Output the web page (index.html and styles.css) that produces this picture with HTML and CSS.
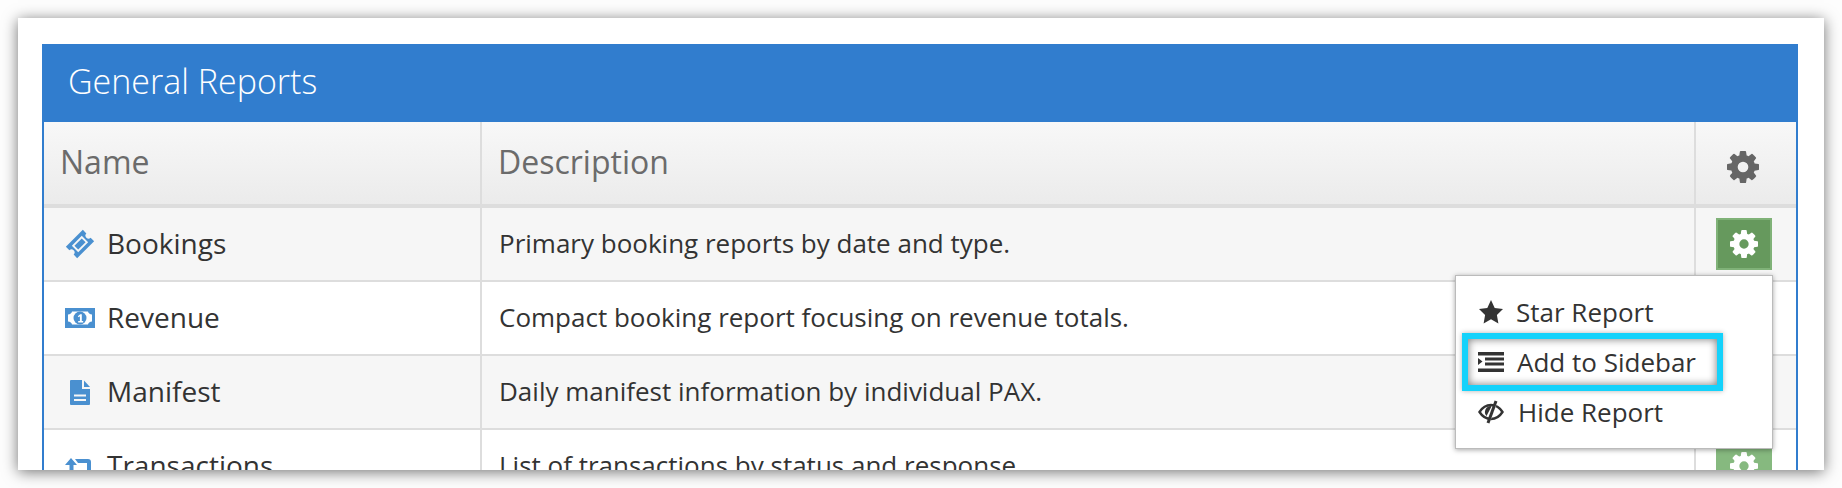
FILE: index.html
```html
<!DOCTYPE html>
<html>

<head>
    <title>General Reports</title>
    <link rel="stylesheet" href="styles.css">
</head>

<body>
    <svg class="defs">
        <defs>
            <symbol id="cog" viewBox="0 -128 1536 1536">
                <path d="M1024 640q0-106-75-181t-181-75-181 75-75 181 75 181 181 75 181-75 75-181zm512-109v222q0 12-8 23t-20 13l-185 28q-19 54-39 91 35 50 107 138 10 12 10 25t-9 23q-27 37-99 108t-94 71q-12 0-26-9l-138-108q-44 23-91 38-16 136-29 186-7 28-36 28h-222q-14 0-24.5-8.5t-11.5-21.5l-28-184q-49-16-90-37l-141 107q-10 9-25 9-14 0-25-11-126-114-165-168-7-10-7-23 0-12 8-23 15-21 51-66.5t54-70.5q-27-50-41-99l-183-27q-13-2-21-12.5t-8-23.5v-222q0-12 8-23t19-13l186-28q14-46 39-92-40-57-107-138-10-12-10-24 0-10 9-23 26-36 98.5-107.5t94.5-71.5q13 0 26 10l138 107q44-23 91-38 16-136 29-186 7-28 36-28h222q14 0 24.5 8.5t11.5 21.5l28 184q49 16 90 37l142-107q9-9 24-9 13 0 25 10 129 119 165 170 7 8 7 22 0 12-8 23-15 21-51 66.5t-54 70.5q26 50 41 98l183 28q13 2 21 12.5t8 23.5z" />
            </symbol>
        </defs>
    </svg>

    <div class="card">
        <div class="panel">
            <div class="panel-title">General Reports</div>
            <div class="panel-body">
                <table class="list">
                    <thead>
                        <tr>
                            <th class="col-name">Name</th>
                            <th>Description</th>
                            <th class="col-gear"><svg class="head-cog"><use href="#cog" /></svg></th>
                        </tr>
                    </thead>
                    <tbody>
                        <tr>
                            <td>
                                <div class="name-cell">
                                    <svg class="row-icon" viewBox="0 0 30 30">
                                        <g transform="rotate(-45 15 15)">
                                            <path fill-rule="evenodd" d="M3 7h24v5a3 3 0 0 0 0 6v5H3v-5a3 3 0 0 0 0-6zM8 10.500v9h14v-9z" />
                                            <rect x="9.800" y="12.300" width="10.400" height="5.400" />
                                        </g>
                                    </svg>
                                    Bookings
                                </div>
                            </td>
                            <td>Primary booking reports by date and type.</td>
                            <td class="col-gear"><div class="gear-btn active"><svg class="btn-cog"><use href="#cog" /></svg></div></td>
                        </tr>
                        <tr>
                            <td>
                                <div class="name-cell">
                                    <svg class="row-icon" viewBox="0 0 30 30">
                                        <path fill-rule="evenodd" d="M0 5h30v20H0zM7 8.500c0 1.500-2 3-4 3v7c2 0 4 1.500 4 3h16c0-1.500 2-3 4-3v-7c-2 0-4-1.500-4-3z" />
                                        <circle cx="15" cy="15" r="6.500" />
                                        <path class="cut" d="M12.800 13.200l2.400-2h1.600v6.800h1.400v1.400h-5v-1.400h1.700v-4.700l-1.200.9z" />
                                    </svg>
                                    Revenue
                                </div>
                            </td>
                            <td>Compact booking report focusing on revenue totals.</td>
                            <td class="col-gear"><div class="gear-btn"><svg class="btn-cog"><use href="#cog" /></svg></div></td>
                        </tr>
                        <tr>
                            <td>
                                <div class="name-cell">
                                    <svg class="row-icon" viewBox="0 0 30 30">
                                        <path fill-rule="evenodd" d="M6 3h11v9h8v15a1 1 0 0 1-1 1H6a1 1 0 0 1-1-1V4a1 1 0 0 1 1-1zM9 17.500v2h12v-2zM9 22v2h12v-2z" />
                                        <path d="M19 3.500l6 6.500h-6z" />
                                    </svg>
                                    Manifest
                                </div>
                            </td>
                            <td>Daily manifest information by individual PAX.</td>
                            <td class="col-gear"><div class="gear-btn"><svg class="btn-cog"><use href="#cog" /></svg></div></td>
                        </tr>
                        <tr>
                            <td>
                                <div class="name-cell">
                                    <svg class="row-icon" viewBox="0 0 30 30">
                                        <path d="M6 7l6 7H8.500v8H19l3 4H7a2.500 2.500 0 0 1-2.500-2.500V14H0z" />
                                        <path d="M10 8h13a3 3 0 0 1 3 3v8h4l-6 7-6-7h4v-7h-9z" />
                                    </svg>
                                    Transactions
                                </div>
                            </td>
                            <td>List of transactions by status and response.</td>
                            <td class="col-gear"><div class="gear-btn"><svg class="btn-cog"><use href="#cog" /></svg></div></td>
                        </tr>
                    </tbody>
                </table>

                <div class="menu">
                    <div class="menu-item">
                        <svg class="menu-icon" viewBox="0 0 26 26">
                            <path d="M13 1l3.700 7.900 8.300 1.100-6.100 5.900 1.500 8.600L13 20.300l-7.400 4.200 1.500-8.600L1 10l8.300-1.100z" />
                        </svg>
                        Star Report
                    </div>
                    <div class="menu-item highlight">
                        <svg class="menu-icon" viewBox="0 0 26 26">
                            <path d="M0 3h26v3.500H0zM7 8.500h19v3H7zM7 13.500h19v3H7zM0 19.500h26V23H0zM0 9l4.500 3.500L0 16z" />
                        </svg>
                        Add to Sidebar
                    </div>
                    <div class="menu-item hide-item">
                        <svg class="menu-icon" viewBox="0 0 26 26">
                            <path class="eye" d="M1.500 13C5 7.500 9 6 13 6s8 1.500 11.500 7C21 18.500 17 20 13 20S5 18.500 1.500 13z" />
                            <path d="M13 7a6 6 0 0 0-4.500 10l5-9.500z" />
                            <path class="slash-gap" d="M18.500 3L11 23" />
                            <path class="slash" d="M18 2L10 24" />
                        </svg>
                        Hide Report
                    </div>
                </div>
            </div>
        </div>
    </div>
</body>

</html>
```

FILE: styles.css
```css
html, body {
    margin: 0;
    height: 488px;
    overflow: hidden;
    background: #fdfdfd;
    font-family: "Open Sans", "Liberation Sans", sans-serif;
}

.defs {
    display: none;
}

.card {
    margin: 18px;
    height: 452px;
    padding: 26px 26px 0 24px;
    box-sizing: border-box;
    background: #fff;
    overflow: hidden;
    box-shadow: 0 2px 14px rgba(0, 0, 0, .55);
}

.panel-title {
    height: 78px;
    padding-left: 26px;
    box-sizing: border-box;
    background: #317dce;
    color: #fff;
    font-size: 34px;
    font-weight: 300;
    line-height: 74px;
}

.panel-body {
    position: relative;
    border-left: 2px solid #317dce;
    border-right: 2px solid #317dce;
}

table.list {
    width: 100%;
    table-layout: fixed;
    border-collapse: separate;
    border-spacing: 0;
}

th, td {
    text-align: left;
    padding: 0 17px;
    border-right: 2px solid #ddd;
    border-bottom: 2px solid #ddd;
    overflow: hidden;
    white-space: nowrap;
}

th {
    height: 78px;
    padding: 0 17px 4px 16px;
    border-bottom-width: 4px;
    background: linear-gradient(#f8f8f8, #ebebeb);
    color: #6b6b6b;
    font-size: 32px;
    font-weight: 400;
}

td {
    height: 69px;
    padding-bottom: 3px;
    color: #333;
    font-size: 26px;
}

tbody tr:nth-child(odd) td {
    background: #f6f6f6;
}

.col-name {
    width: 403px;
}

th.col-gear, td.col-gear {
    width: 100px;
    padding: 0;
    border-right: none;
}

.name-cell {
    display: flex;
    align-items: center;
    gap: 12px;
    padding-left: 4px;
    font-size: 28px;
}

.row-icon {
    width: 30px;
    height: 30px;
    margin-top: 3px;
    fill: #4a90d0;
}

.row-icon .cut {
    fill: #fff;
}

.head-cog {
    display: block;
    width: 32px;
    height: 32px;
    margin: 8px 0 0 31px;
    fill: #666;
}

.gear-btn {
    display: flex;
    align-items: center;
    justify-content: center;
    width: 56px;
    height: 52px;
    margin-left: 20px;
    box-sizing: border-box;
    background: #86b97f;
    border: 2px solid #86b97f;
}

.gear-btn.active {
    background: #66995d;
    border-color: #80b278;
}

.btn-cog {
    width: 28px;
    height: 28px;
    fill: #fff;
}

.menu {
    position: absolute;
    top: 153px;
    right: 23px;
    width: 318px;
    height: 174px;
    padding-top: 11px;
    box-sizing: border-box;
    background: #fff;
    border: 1px solid #bbb;
    box-shadow: 0 1px 5px rgba(0, 0, 0, .35);
}

.menu-item {
    display: flex;
    align-items: center;
    gap: 12px;
    width: fit-content;
    height: 50px;
    padding-left: 22px;
    color: #333;
    font-size: 26px;
}

.menu-item.hide-item {
    gap: 14px;
}

.menu-icon {
    width: 26px;
    height: 26px;
    fill: #333;
}

.menu-icon .eye {
    fill: none;
    stroke: #333;
    stroke-width: 2.400;
}

.menu-icon .slash-gap {
    fill: none;
    stroke: #fff;
    stroke-width: 2;
}

.menu-icon .slash {
    fill: none;
    stroke: #333;
    stroke-width: 3;
}

.menu-item.highlight {
    height: 58px;
    gap: 13px;
    margin: -4px 0 -4px 6px;
    padding: 0 21px 0 10px;
    border: 6px solid #14d2fb;
    box-sizing: border-box;
    box-shadow: 0 0 5px rgba(0, 0, 0, .3), inset 0 0 8px rgba(0, 0, 0, .55);
}
```
